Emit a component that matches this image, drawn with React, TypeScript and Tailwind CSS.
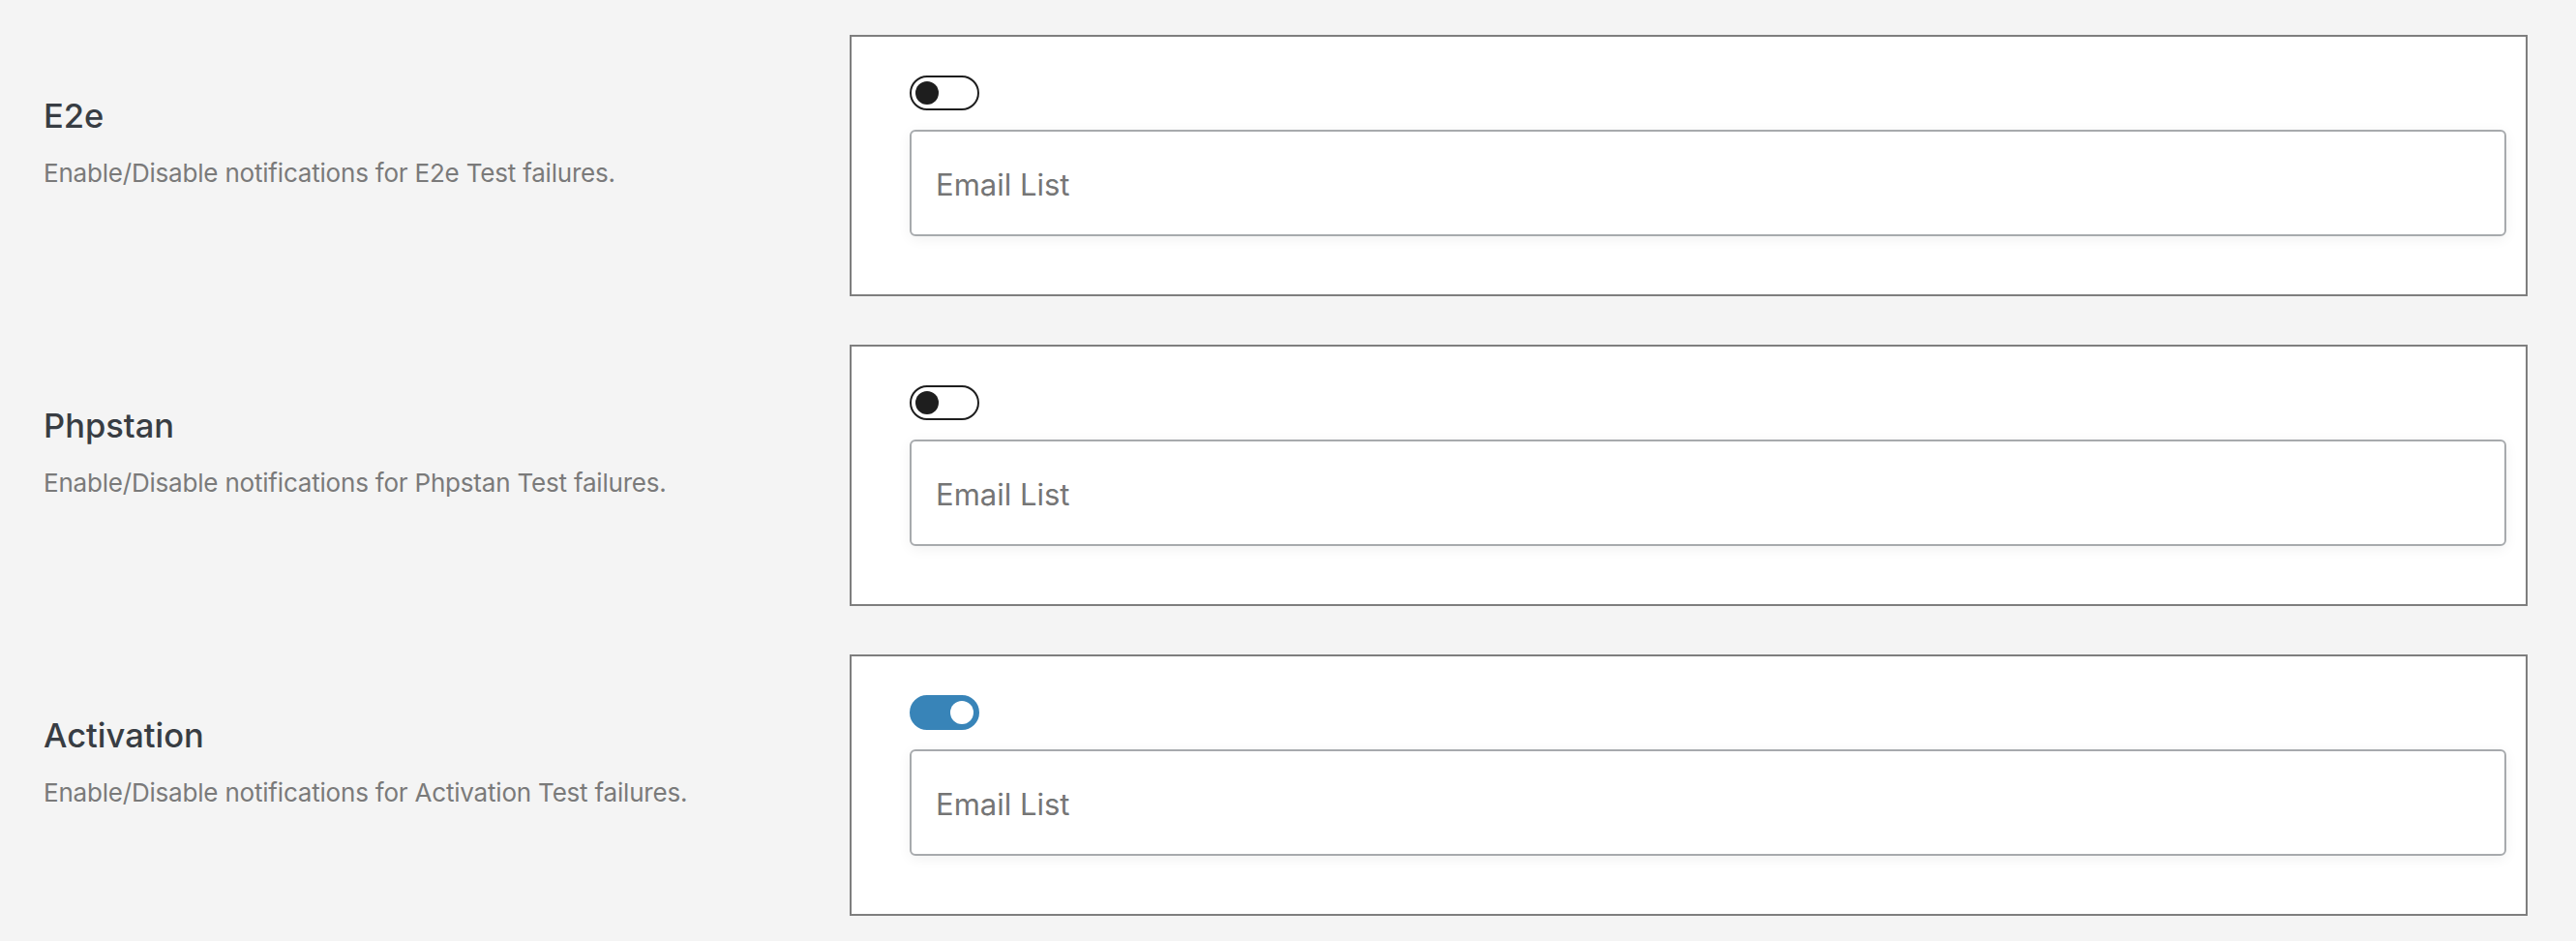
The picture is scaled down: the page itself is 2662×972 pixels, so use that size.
import { useState } from 'react';

type Row = { id: string; title: string; enabled: boolean };

const rows: Row[] = [
    { id: 'e2e', title: 'E2e', enabled: false },
    { id: 'phpstan', title: 'Phpstan', enabled: false },
    { id: 'activation', title: 'Activation', enabled: true },
];

function Toggle({ on, onChange }: { on: boolean; onChange: () => void }) {
    return (
        <button
            type="button"
            onClick={onChange}
            className={`relative block w-[72px] h-[36px] rounded-full border-2 ${on ? 'bg-[#3884b8] border-[#3884b8]' : 'bg-white border-[#1e1e1e]'}`}
        >
            <span
                className={`absolute top-[4px] w-[24px] h-[24px] rounded-full ${on ? 'left-[40px] bg-white' : 'left-[4px] bg-[#1e1e1e]'}`}
            />
        </button>
    );
}

function SettingRow({ row }: { row: Row }) {
    const [on, setOn] = useState(row.enabled);

    return (
        <div className="flex">
            {/* Label column */}
            <div className="w-[878px] shrink-0 pl-[45px] pt-[64px]">
                <h2 className="text-[34.5px] leading-[40px] font-medium text-[#383d43]">{row.title}</h2>
                <p className="mt-[21px] text-[26px] leading-[36px] tracking-[-0.2px] text-[#7a7a7a]">
                    Enable/Disable notifications for {row.title} Test failures.
                </p>
            </div>

            {/* Settings card */}
            <div className="w-[1734px] h-[270px] shrink-0 bg-white border-2 border-[#7e7e7e] pt-[40px] pl-[60px] pr-[20px] pb-[60px] flex flex-col gap-[20px]">
                <Toggle on={on} onChange={() => setOn(!on)} />
                <input
                    type="text"
                    placeholder="Email List"
                    className="w-full h-[110px] bg-white border-2 border-[#a7aaad] rounded-[6px] pl-[25px] pt-[3px] text-[31px] text-[#2c3338] placeholder:text-[#757575] outline-none shadow-[0_3px_14px_rgba(0,0,0,0.06)]"
                />
            </div>
        </div>
    );
}

export default function App() {
    return (
        <div className="min-h-[972px] bg-[#f4f4f4] pt-[36px] font-['Inter','Liberation_Sans',sans-serif]">
            <div className="flex flex-col gap-[50px]">
                {rows.map((row) => (
                    <SettingRow key={row.id} row={row} />
                ))}
            </div>
        </div>
    );
}
